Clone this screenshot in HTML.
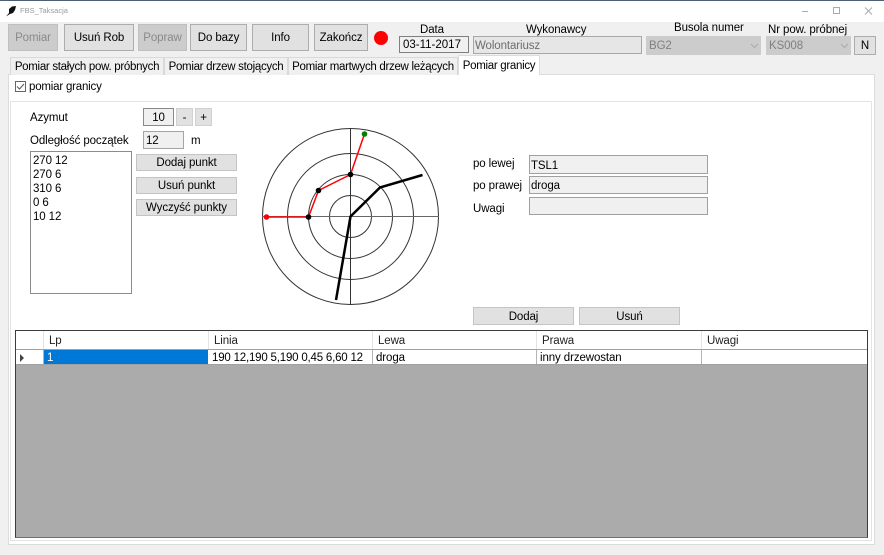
<!DOCTYPE html>
<html><head><meta charset="utf-8"><style>
html,body{margin:0;padding:0}
body{width:884px;height:555px;position:relative;overflow:hidden;background:#f0f0f0;font:11.5px/14px "Liberation Sans",sans-serif;letter-spacing:-.1px;color:#000}
div{position:absolute;box-sizing:border-box;white-space:nowrap}
.b{background:#e1e1e1;border:1px solid #adadad;text-align:center;padding-top:1px}
.d{background:#cccccc;border:1px solid #bfbfbf;color:#8a8a8a;text-align:center;padding-top:1px}
.t{background:#f0f0f0;border:1px solid #d9d9d9;border-bottom:none;text-align:center;line-height:17px;padding-top:1px;letter-spacing:-.3px}
.i{background:#f0f0f0;border:1px solid #a0a0a0;padding-left:3px;padding-top:1px}
.l{line-height:14px;padding-top:1px}
.h{top:331px;height:18px;line-height:18px;padding-left:5px;padding-top:1px;border-right:1px solid #e3e3e3;background:#fff;color:#222}
.c{top:350px;height:14px;line-height:14px;padding-left:3px;padding-top:1px;border-right:1px solid #b4b4b4;background:#fff}
</style></head><body>
<div style="left:0;top:0;width:884px;height:1px;background:#4d5f70"></div>
<div style="left:0;top:1px;width:884px;height:21px;background:#fff"></div>
<svg style="position:absolute;left:5px;top:5px" width="13" height="12" viewBox="0 0 13 12"><path d="M1 11.500 L4 8 L4 4 L7 1.500 L11 1 L10 5 L8 8 L5 9 Z" fill="#111"/></svg>
<div style="left:20px;top:5px;font-size:7.500px;line-height:12px;letter-spacing:0;color:#9a9a9a">FBS_Taksacja</div>
<svg style="position:absolute;left:800px;top:1px" width="84" height="21" viewBox="0 0 84 21"><path d="M2 10.500H8" stroke="#aaa" fill="none"/><path d="M33.500 6.500h6v6h-6z" stroke="#aaa" fill="none"/><path d="M65 6.500l7 7M72 6.500l-7 7" stroke="#aaa" fill="none"/></svg>

<div class="d" style="left:8px;top:24px;width:50px;height:27px;line-height:25px">Pomiar</div>
<div class="b" style="left:64px;top:24px;width:70px;height:27px;line-height:25px">Usuń Rob</div>
<div class="d" style="left:138px;top:24px;width:49px;height:27px;line-height:25px">Popraw</div>
<div class="b" style="left:190px;top:24px;width:57px;height:27px;line-height:25px">Do bazy</div>
<div class="b" style="left:252px;top:24px;width:57px;height:27px;line-height:25px">Info</div>
<div class="b" style="left:314px;top:24px;width:54px;height:27px;line-height:25px">Zakończ</div>
<div style="left:374px;top:31px;width:14px;height:14px;border-radius:50%;background:#f00"></div>

<div class="l" style="left:420px;top:22px">Data</div>
<div style="left:399px;top:36px;width:70px;height:17px;background:#f0f0f0;border:1px solid #7f7f7f;line-height:15px;padding:1px 0 0 3px;letter-spacing:0">03-11-2017</div>
<div class="l" style="left:526px;top:22px">Wykonawcy</div>
<div style="left:473px;top:36px;width:169px;height:18px;background:#e6e6e6;border:1px solid #a8a8a8;line-height:16px;padding:1px 0 0 1px;color:#6d6d6d">Wolontariusz</div>
<div class="l" style="left:674px;top:20px">Busola numer</div>
<div style="left:646px;top:36px;width:115px;height:19px;background:#ccc;line-height:19px;padding:1px 0 0 3px;color:#808080">BG2</div>
<svg style="position:absolute;left:750px;top:43px" width="9" height="6"><path d="M1 1l3.500 3.500L8 1" stroke="#aaa" fill="none"/></svg>
<div class="l" style="left:768px;top:22px">Nr pow. próbnej</div>
<div style="left:766px;top:36px;width:85px;height:19px;background:#ccc;line-height:19px;padding:1px 0 0 3px;color:#808080">KS008</div>
<svg style="position:absolute;left:840px;top:43px" width="9" height="6"><path d="M1 1l3.500 3.500L8 1" stroke="#aaa" fill="none"/></svg>
<div class="b" style="left:854px;top:36px;width:22px;height:19px;line-height:17px">N</div>

<div style="left:8px;top:74px;width:867px;height:471px;background:#fff;border:1px solid #dcdcdc"></div>
<div class="t" style="left:10px;top:57px;width:154px;height:18px">Pomiar stałych pow. próbnych</div>
<div class="t" style="left:164px;top:57px;width:124px;height:18px">Pomiar drzew stojących</div>
<div class="t" style="left:288px;top:57px;width:170px;height:18px">Pomiar martwych drzew leżących</div>
<div style="left:458px;top:55px;width:82px;height:20px;background:#fff;border:1px solid #dcdcdc;border-bottom:none;text-align:center;line-height:18px;padding-top:1px;letter-spacing:-.3px">Pomiar granicy</div>

<svg style="position:absolute;left:15px;top:81px" width="11" height="11"><rect x=".5" y=".5" width="10" height="10" fill="#fff" stroke="#666"/><path d="M2 5.500l2.500 2.500L9 3" fill="none" stroke="#555"/></svg>
<div class="l" style="left:29px;top:79px;letter-spacing:-.2px">pomiar granicy</div>

<div style="left:10px;top:101px;width:862px;height:440px;border:1px solid #e3e3e3;background:#fff"></div>

<div class="l" style="left:30px;top:110px">Azymut</div>
<div style="left:143px;top:108px;width:31px;height:18px;background:#f0f0f0;border:1px solid #8a8a8a;text-align:center;line-height:16px;padding-top:1px">10</div>
<div class="b" style="left:176px;top:108px;width:17px;height:18px;line-height:16px;border-color:#d0d0d0">-</div>
<div class="b" style="left:195px;top:108px;width:17px;height:18px;line-height:16px;border-color:#d0d0d0">+</div>
<div class="l" style="left:30px;top:133px">Odległość początek</div>
<div style="left:143px;top:131px;width:41px;height:18px;background:#f0f0f0;border:1px solid #a5a5a5;line-height:16px;padding:1px 0 0 2px">12</div>
<div class="l" style="left:191px;top:133px">m</div>

<div style="left:30px;top:151px;width:102px;height:143px;background:#fff;border:1px solid #8c8c8c;padding:2px 2px;line-height:14px;white-space:pre">270 12
270 6
310 6
0 6
10 12</div>

<div class="b" style="left:136px;top:154px;width:101px;height:17px;line-height:15px;border-color:#c4c4c4">Dodaj punkt</div>
<div class="b" style="left:136px;top:177px;width:101px;height:17px;line-height:15px;border-color:#c4c4c4">Usuń punkt</div>
<div class="b" style="left:136px;top:199px;width:101px;height:17px;line-height:15px;border-color:#c4c4c4">Wyczyść punkty</div>

<svg style="position:absolute;left:250px;top:120px" width="200" height="190" viewBox="250 120 200 190">
<g fill="none" stroke="#333" stroke-width="1">
<circle cx="350.500" cy="216.500" r="21"/>
<circle cx="350.500" cy="216.500" r="42"/>
<circle cx="350.500" cy="216.500" r="63"/>
<circle cx="350.500" cy="216.500" r="88"/>
<path d="M350.500 128V305"/>
<path d="M262 216.500H439" stroke="#666"/>
</g>
<path d="M266.500 217H308.500L318.500 190.500L350.500 174.500L364.500 134" fill="none" stroke="#f00" stroke-width="1.500"/>
<path d="M336 300L350.500 216.500L380 187.500L422.500 175" fill="none" stroke="#000" stroke-width="2.500"/>
<circle cx="266.500" cy="217" r="2.800" fill="#f00"/>
<circle cx="364.500" cy="134" r="2.800" fill="#008000"/>
<circle cx="308.500" cy="217" r="2.800" fill="#000"/>
<circle cx="318.500" cy="190.500" r="2.800" fill="#000"/>
<circle cx="350.500" cy="174.500" r="2.800" fill="#000"/>
</svg>

<div class="l" style="left:473px;top:156px">po lewej</div>
<div class="i" style="left:529px;top:155px;width:179px;height:19px;line-height:18px;padding-left:1px">TSL1</div>
<div class="l" style="left:473px;top:178px">po prawej</div>
<div class="i" style="left:529px;top:176px;width:179px;height:18px;line-height:16px;padding-left:1px">droga</div>
<div class="l" style="left:473px;top:201px">Uwagi</div>
<div class="i" style="left:529px;top:197px;width:179px;height:18px"></div>

<div class="b" style="left:473px;top:307px;width:101px;height:18px;line-height:17px;border-color:#c4c4c4">Dodaj</div>
<div class="b" style="left:579px;top:307px;width:101px;height:18px;line-height:17px;border-color:#c4c4c4">Usuń</div>

<div style="left:15px;top:330px;width:853px;height:208px;background:#ababab;border:1px solid #3c3c3c;border-bottom-color:#6f6f6f"></div>
<div style="left:16px;top:331px;width:851px;height:19px;background:#fff;border-bottom:1px solid #a0a0a0"></div>
<div class="h" style="left:16px;width:28px"></div>
<div class="h" style="left:44px;width:165px">Lp</div>
<div class="h" style="left:209px;width:164px">Linia</div>
<div class="h" style="left:373px;width:164px">Lewa</div>
<div class="h" style="left:537px;width:165px">Prawa</div>
<div class="h" style="left:702px;width:165px;border-right:none">Uwagi</div>
<div class="c" style="left:16px;width:28px"></div>
<svg style="position:absolute;left:20px;top:354px" width="5" height="8"><path d="M0 0l4 4L0 8z" fill="#444"/></svg>
<div class="c" style="left:44px;width:165px;background:#0078d7;color:#fff;border-right:1px solid #fff">1</div>
<div class="c" style="left:209px;width:164px;letter-spacing:-.2px">190 12,190 5,190 0,45 6,60 12</div>
<div class="c" style="left:373px;width:164px">droga</div>
<div class="c" style="left:537px;width:165px">inny drzewostan</div>
<div class="c" style="left:702px;width:165px;border-right:none"></div>
<div style="left:16px;top:364px;width:851px;height:1px;background:#a0a0a0"></div>
</body></html>
